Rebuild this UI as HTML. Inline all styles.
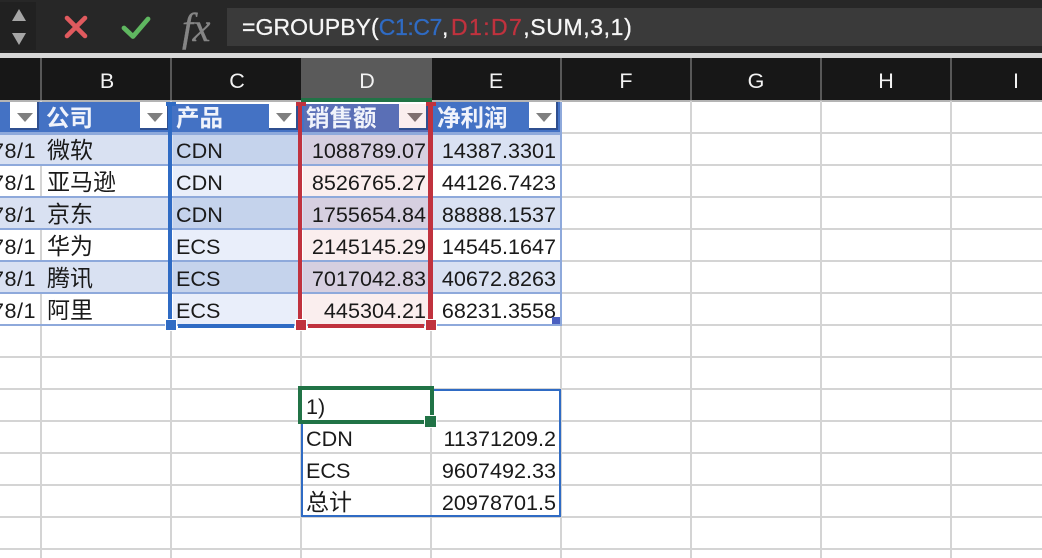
<!DOCTYPE html>
<html><head><meta charset="utf-8">
<style>
html,body{margin:0;padding:0;background:#fff}
#p{position:relative;width:1042px;height:558px;overflow:hidden;background:#fff;font-family:"Liberation Sans","Noto Sans CJK SC",sans-serif;color:#1a1a1a}
#p div{position:absolute}
.vl{width:2px;background:#d4d4d4;top:101px;height:457px}
.hl{height:2px;background:#d4d4d4;left:0;width:1042px}
.ch{top:58px;height:42px;line-height:46px;text-align:center;color:#f2f2f2;font-size:21.5px;width:130px}
.cs{top:58px;width:2px;height:42px;background:#585858}
.t{font-size:21.6px;line-height:32px;height:32px;white-space:nowrap}
.r{text-align:right}
.z{font-size:23px}
.h{font-size:23.5px;font-weight:bold;color:#f0f3fb;line-height:33px;height:32px;white-space:nowrap}
.b{height:2px;background:#8ea9db}
.fb{width:29px;height:28px;top:102px;background:#fff;border-right:2px solid #2f4f8f;border-bottom:2px solid #2f4f8f;box-sizing:border-box}
.tri{width:0;height:0;top:113px;border-left:8px solid transparent;border-right:8px solid transparent;border-top:9px solid #7f7f7f}
</style></head><body>
<div id="p">
<!-- formula bar -->
<div style="left:0;top:0;width:1042px;height:53px;background:#272727"></div>
<div style="left:0;top:2px;width:36px;height:48px;background:#212121"></div>
<div style="left:12px;top:9px;width:0;height:0;border-left:7px solid transparent;border-right:7px solid transparent;border-bottom:12px solid #a6a6a6"></div>
<div style="left:12px;top:33px;width:0;height:0;border-left:7px solid transparent;border-right:7px solid transparent;border-top:12px solid #a6a6a6"></div>
<svg style="position:absolute;left:60px;top:10px" width="100" height="36" viewBox="0 0 100 36">
<path d="M7 8 L25 26 M25 8 L7 26" stroke="#e05a5e" stroke-width="4.6" stroke-linecap="round" fill="none"/>
<path d="M64 18 L73 26.5 L88 9" stroke="#5fb760" stroke-width="4.8" stroke-linecap="round" stroke-linejoin="round" fill="none"/>
</svg>
<div style="left:182px;top:6px;font-family:'Liberation Serif',serif;font-style:italic;font-size:40px;line-height:44px;color:#858585;letter-spacing:-.5px;-webkit-text-stroke:.4px #858585">fx</div>
<div style="left:227px;top:8px;width:815px;height:38px;background:#3a3a3a"></div>
<div style="left:242px;top:8px;height:38px;line-height:39px;font-size:23px;letter-spacing:.62px;color:#f6f6f6;white-space:nowrap;-webkit-text-stroke:.3px"><span style="letter-spacing:.07px">=GROUPBY(</span><span style="color:#2f6bc4;letter-spacing:-.4px">C1:C7</span><span style="letter-spacing:2.6px">,</span><span style="color:#c0323e;letter-spacing:1.42px">D1:D7</span>,SUM,3,1)</div>
<div style="left:0;top:53px;width:1042px;height:5px;background:#d8d8d8"></div>
<!-- column headers -->
<div style="left:0;top:58px;width:1042px;height:42px;background:#171717"></div>
<div style="left:301px;top:58px;width:131px;height:42px;background:#5a5a5a"></div>
<div class="cs" style="left:40px"></div><div class="cs" style="left:170px"></div><div class="cs" style="left:560px"></div><div class="cs" style="left:690px"></div><div class="cs" style="left:820px"></div><div class="cs" style="left:950px"></div>
<div class="ch" style="left:42px">B</div><div class="ch" style="left:172px">C</div><div class="ch" style="left:302px">D</div><div class="ch" style="left:431px">E</div><div class="ch" style="left:561px">F</div><div class="ch" style="left:691px">G</div><div class="ch" style="left:821px">H</div><div class="ch" style="left:951px">I</div>
<div style="left:0;top:100px;width:1042px;height:2px;background:#b4b4b4"></div>
<!-- grid -->
<div class="vl" style="left:40px"></div><div class="vl" style="left:170px"></div><div class="vl" style="left:300px"></div><div class="vl" style="left:430px"></div><div class="vl" style="left:560px"></div><div class="vl" style="left:690px"></div><div class="vl" style="left:820px"></div><div class="vl" style="left:950px"></div>
<div class="hl" style="top:132px"></div><div class="hl" style="top:164px"></div><div class="hl" style="top:196px"></div><div class="hl" style="top:228px"></div><div class="hl" style="top:260px"></div><div class="hl" style="top:292px"></div><div class="hl" style="top:324px"></div><div class="hl" style="top:356px"></div><div class="hl" style="top:388px"></div><div class="hl" style="top:420px"></div><div class="hl" style="top:452px"></div><div class="hl" style="top:484px"></div><div class="hl" style="top:516px"></div><div class="hl" style="top:548px"></div>
<!-- table bands -->
<div style="left:0;top:102px;width:561px;height:31px;background:#4472c4"></div>
<div style="left:0;top:133px;width:561px;height:32px;background:#d9e1f2"></div>
<div style="left:0;top:197px;width:561px;height:32px;background:#d9e1f2"></div>
<div style="left:0;top:261px;width:561px;height:32px;background:#d9e1f2"></div>
<!-- C selection -->
<div style="left:173px;top:133px;width:127px;height:192px;background:#e9eefa"></div>
<div style="left:173px;top:133px;width:127px;height:32px;background:#c5d3ec"></div>
<div style="left:173px;top:197px;width:127px;height:32px;background:#c5d3ec"></div>
<div style="left:173px;top:261px;width:127px;height:32px;background:#c5d3ec"></div>
<!-- D selection -->
<div style="left:303px;top:133px;width:127px;height:192px;background:#faeeee"></div>
<div style="left:303px;top:133px;width:127px;height:32px;background:#d6cfe0"></div>
<div style="left:303px;top:197px;width:127px;height:32px;background:#d6cfe0"></div>
<div style="left:303px;top:261px;width:127px;height:32px;background:#d6cfe0"></div>
<div style="left:304px;top:102px;width:127px;height:31px;background:#5a6fb6"></div>
<!-- band lines -->
<div class="b" style="left:0;top:132px;width:561px;height:3px"></div>
<div class="b" style="left:0;top:164px;width:561px"></div>
<div class="b" style="left:0;top:196px;width:561px"></div>
<div class="b" style="left:0;top:228px;width:561px"></div>
<div class="b" style="left:0;top:260px;width:561px"></div>
<div class="b" style="left:0;top:292px;width:561px"></div>
<div class="b" style="left:0;top:324px;width:561px"></div>
<div style="left:560px;top:102px;width:2px;height:224px;background:#8ea9db"></div>
<!-- filter buttons -->
<div class="fb" style="left:10px"></div><div class="tri" style="left:17px"></div>
<div class="fb" style="left:140px"></div><div class="tri" style="left:147px"></div>
<div class="fb" style="left:269px"></div><div class="tri" style="left:276px"></div>
<div class="fb" style="left:399px;background:#faeeee"></div><div class="tri" style="left:407px;border-top-color:#7f6f6f"></div>
<div class="fb" style="left:529px"></div><div class="tri" style="left:536px"></div>
<!-- headers text -->
<div class="h" style="left:46px;top:102px">公司</div>
<div class="h" style="left:176px;top:102px">产品</div>
<div class="h" style="left:306px;top:102px">销售额</div>
<div class="h" style="left:437px;top:102px">净利润</div>
<!-- A col stub -->
<div class="t r" style="left:-20px;width:56px;top:135px;letter-spacing:.5px">78/1</div>
<div class="t r" style="left:-20px;width:56px;top:167px;letter-spacing:.5px">78/1</div>
<div class="t r" style="left:-20px;width:56px;top:199px;letter-spacing:.5px">78/1</div>
<div class="t r" style="left:-20px;width:56px;top:231px;letter-spacing:.5px">78/1</div>
<div class="t r" style="left:-20px;width:56px;top:263px;letter-spacing:.5px">78/1</div>
<div class="t r" style="left:-20px;width:56px;top:295px;letter-spacing:.5px">78/1</div>
<!-- B -->
<div class="t z" style="left:47px;top:134px">微软</div>
<div class="t z" style="left:47px;top:166px">亚马逊</div>
<div class="t z" style="left:47px;top:198px">京东</div>
<div class="t z" style="left:47px;top:230px">华为</div>
<div class="t z" style="left:47px;top:262px">腾讯</div>
<div class="t z" style="left:47px;top:294px">阿里</div>
<!-- C -->
<div class="t" style="left:176px;top:135px">CDN</div>
<div class="t" style="left:176px;top:167px">CDN</div>
<div class="t" style="left:176px;top:199px">CDN</div>
<div class="t" style="left:176px;top:231px">ECS</div>
<div class="t" style="left:176px;top:263px">ECS</div>
<div class="t" style="left:176px;top:295px">ECS</div>
<!-- D -->
<div class="t r" style="left:300px;width:126px;top:135px">1088789.07</div>
<div class="t r" style="left:300px;width:126px;top:167px">8526765.27</div>
<div class="t r" style="left:300px;width:126px;top:199px">1755654.84</div>
<div class="t r" style="left:300px;width:126px;top:231px">2145145.29</div>
<div class="t r" style="left:300px;width:126px;top:263px">7017042.83</div>
<div class="t r" style="left:300px;width:126px;top:295px">445304.21</div>
<!-- E -->
<div class="t r" style="left:430px;width:126px;top:135px">14387.3301</div>
<div class="t r" style="left:430px;width:126px;top:167px">44126.7423</div>
<div class="t r" style="left:430px;width:126px;top:199px">88888.1537</div>
<div class="t r" style="left:430px;width:126px;top:231px">14545.1647</div>
<div class="t r" style="left:430px;width:126px;top:263px">40672.8263</div>
<div class="t r" style="left:430px;width:126px;top:295px">68231.3558</div>
<div style="left:552px;top:317px;width:8px;height:7px;background:#4a5fc0"></div>
<!-- range C outline -->
<div style="left:168px;top:102px;width:4px;height:222px;background:#2f6bc4"></div>
<div style="left:172px;top:102px;width:126px;height:2px;background:#fff"></div>
<div style="left:166px;top:102px;width:10px;height:4px;background:#2f6bc4"></div>
<div style="left:178px;top:324px;width:116px;height:4px;background:#2f6bc4"></div>
<div style="left:166px;top:320px;width:10px;height:10px;background:#2f6bc4;outline:1px solid #fff"></div>
<!-- range D outline -->
<div style="left:301px;top:98px;width:131px;height:3.5px;background:#217346"></div>
<div style="left:302px;top:102px;width:126px;height:2px;background:#fff"></div>
<div style="left:297.5px;top:102px;width:4.5px;height:222px;background:#c0323e"></div>
<div style="left:428px;top:102px;width:4.5px;height:222px;background:#c0323e"></div>
<div style="left:296px;top:102px;width:10px;height:4px;background:#c0323e"></div>
<div style="left:426px;top:102px;width:10px;height:4px;background:#c0323e"></div>
<div style="left:308px;top:324px;width:116px;height:4px;background:#c0323e"></div>
<div style="left:296px;top:320px;width:10px;height:10px;background:#c0323e;outline:1px solid #fff"></div>
<div style="left:426px;top:320px;width:10px;height:10px;background:#c0323e;outline:1px solid #fff"></div>
<!-- spill -->
<div style="left:301px;top:389px;width:260px;height:128px;background:#fff;border:2px solid #2f6bc4;box-sizing:border-box"></div>
<div style="left:303px;top:452px;width:256px;height:2px;background:#d4d4d4"></div>
<div style="left:303px;top:484px;width:256px;height:2px;background:#d4d4d4"></div>
<div style="left:430px;top:391px;width:2px;height:124px;background:#d4d4d4"></div>
<div style="left:303px;top:420px;width:256px;height:2px;background:#d4d4d4"></div>
<div style="left:298px;top:386px;width:136px;height:38px;border:4px solid #217346;box-sizing:border-box;background:#fff"></div>
<div style="left:425px;top:416px;width:11px;height:11px;background:#217346;outline:1px solid #fff"></div>
<div class="t" style="left:306px;top:391px">1)</div>
<div class="t" style="left:306px;top:423px">CDN</div>
<div class="t" style="left:306px;top:455px">ECS</div>
<div class="t z" style="left:306px;top:486px">总计</div>
<div class="t r" style="left:430px;width:126px;top:423px">11371209.2</div>
<div class="t r" style="left:430px;width:126px;top:455px">9607492.33</div>
<div class="t r" style="left:430px;width:126px;top:487px">20978701.5</div>
</div>
</body></html>
